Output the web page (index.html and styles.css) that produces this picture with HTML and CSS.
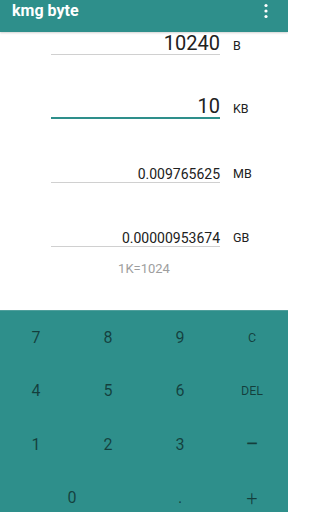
FILE: index.html
```html
<!DOCTYPE html>
<html>
<head>
<meta charset="utf-8">
<link rel="stylesheet" href="styles.css">
</head>
<body>
<div class="app">
  <header class="toolbar">
    <span class="title">kmg byte</span>
    <svg class="menu" width="4" height="16" viewBox="0 0 4 16"><circle cx="2" cy="2.5" r="1.6" fill="#fff"/><circle cx="2" cy="8" r="1.6" fill="#fff"/><circle cx="2" cy="13.5" r="1.6" fill="#fff"/></svg>
  </header>
  <main class="form">
    <div class="row row-first">
      <div class="field big">10240</div>
      <div class="unit">B</div>
    </div>
    <div class="row">
      <div class="field big active">10</div>
      <div class="unit">KB</div>
    </div>
    <div class="row">
      <div class="field small">0.009765625</div>
      <div class="unit">MB</div>
    </div>
    <div class="row">
      <div class="field small">0.00000953674</div>
      <div class="unit">GB</div>
    </div>
    <div class="note">1K=1024</div>
  </main>
  <section class="keypad">
    <div class="key">7</div>
    <div class="key">8</div>
    <div class="key">9</div>
    <div class="key op">C</div>
    <div class="key">4</div>
    <div class="key">5</div>
    <div class="key">6</div>
    <div class="key op">DEL</div>
    <div class="key">1</div>
    <div class="key">2</div>
    <div class="key">3</div>
    <div class="key minus">−</div>
    <div class="key wide">0</div>
    <div class="key">.</div>
    <div class="key plus">+</div>
  </section>
</div>
</body>
</html>
```

FILE: styles.css
```css
html, body {
  margin: 0;
  padding: 0;
}
body {
  width: 288px;
  height: 512px;
  overflow: hidden;
  background: #fff;
  font-family: Roboto, "Noto Sans", sans-serif;
}
.app {
  display: flex;
  flex-direction: column;
  height: 512px;
}
.toolbar {
  height: 32px;
  flex: none;
  background: #2e8f8b;
  display: flex;
  justify-content: space-between;
  align-items: flex-start;
  padding: 0 20px 0 12px;
  box-shadow: 0 1px 2px rgba(0,0,0,0.18);
  position: relative;
  z-index: 1;
}
.title {
  color: #fff;
  font-weight: 700;
  font-size: 16px;
  line-height: 22px;
}
.menu {
  margin-top: 3px;
}
.form {
  height: 278px;
  flex: none;
  display: flex;
  flex-direction: column;
}
.row {
  height: 64px;
  display: flex;
  align-items: flex-end;
  padding-left: 51px;
}
.row-first {
  height: 23px;
}
.field {
  width: 169px;
  text-align: right;
  color: #212121;
  border-bottom: 1px solid #d0d0d0;
  white-space: nowrap;
}
.field.big {
  font-size: 20px;
  line-height: 22px;
}
.field.small {
  font-size: 14px;
  line-height: 16px;
}
.field.active {
  border-bottom: 2px solid #2e8f8b;
}
.unit {
  margin-left: 13px;
  font-size: 12.5px;
  color: #212121;
  line-height: 14px;
  margin-bottom: 2px;
}
.row:nth-child(2) .unit {
  margin-bottom: 3px;
}
.note {
  text-align: center;
  color: #9e9e9e;
  font-size: 13px;
  line-height: 16px;
  margin-top: 14px;
}
.keypad {
  flex: none;
  height: 213px;
  background: #2e8f8b;
  display: grid;
  grid-template-columns: repeat(4, 72px);
  grid-auto-rows: 53.33px;
  border-top: 1px solid #4f9f9c;
}
.key {
  display: flex;
  align-items: center;
  justify-content: center;
  color: rgba(0,0,0,0.56);
  font-size: 16px;
}
.key.op {
  font-size: 12.5px;
}
.key.minus {
  font-size: 24px;
}
.key.plus {
  font-size: 20px;
  font-weight: 300;
}
.key.wide {
  grid-column: span 2;
}
```
